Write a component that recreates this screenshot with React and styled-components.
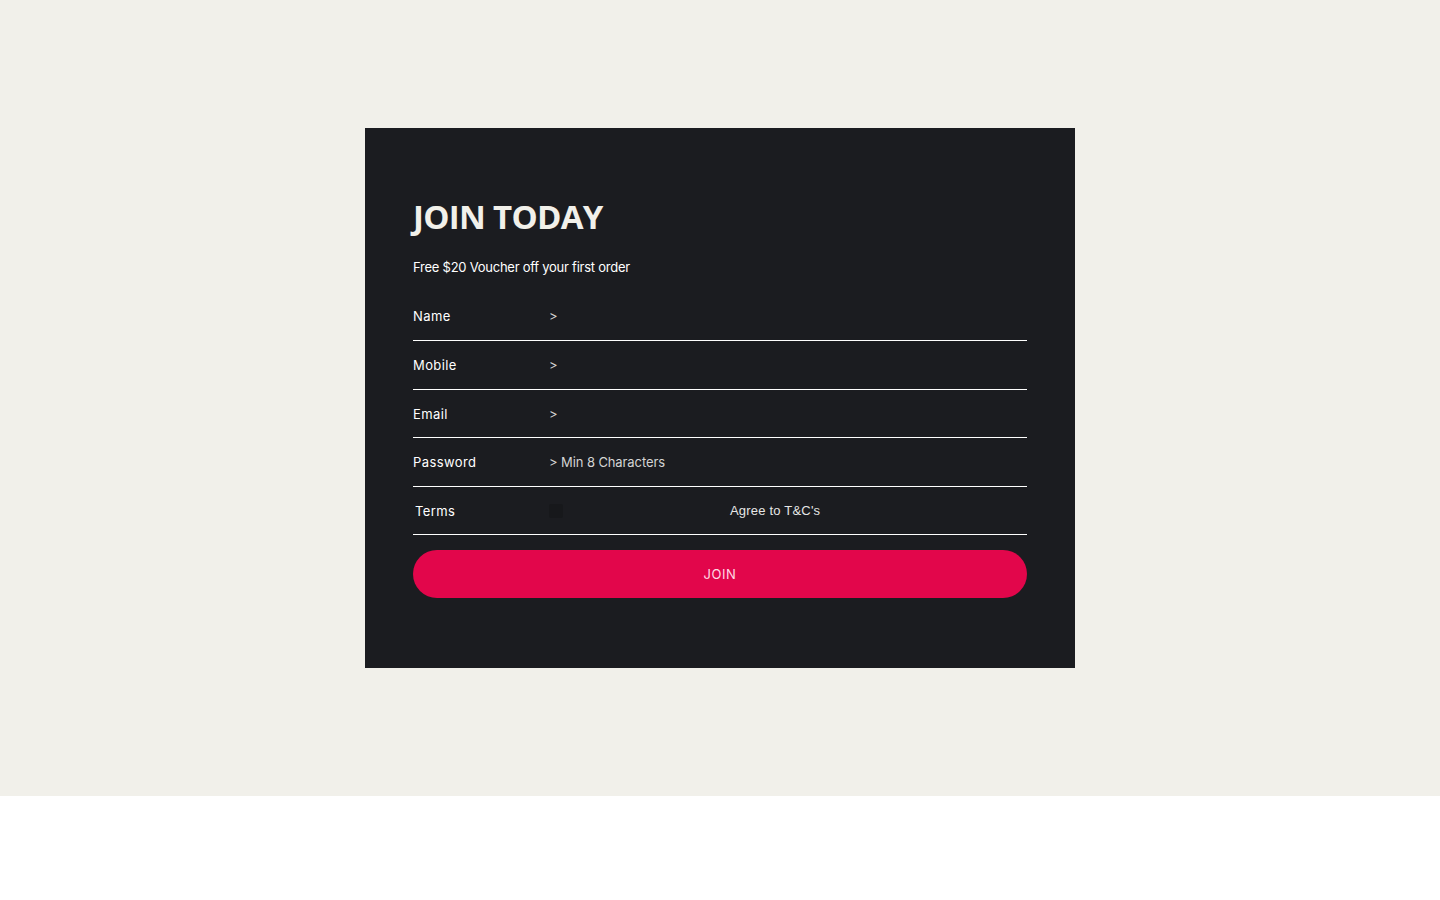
import React from "react";
import styled, { createGlobalStyle } from "styled-components";

const Global = createGlobalStyle`
  html, body { margin: 0; padding: 0; background: #ffffff; }
  body { font-family: Inter, "Liberation Sans", sans-serif; }
  * { box-sizing: border-box; }
`;

const Section = styled.section`
  background: #f1f0ea;
  padding: 128px 0;
  display: flex;
  justify-content: center;
`;

const Card = styled.div`
  width: 710px;
  height: 540px;
  background: #1b1c20;
  padding: 65px 48px 48px;
  display: flex;
  flex-direction: column;
`;

const Title = styled.h1`
  margin: 0;
  font-family: "Open Sans", sans-serif;
  font-weight: 700;
  font-size: 33px;
  line-height: 48px;
  color: #f1f0ea;
  letter-spacing: -0.7px;
`;

const Subtitle = styled.p`
  margin: 17px 0 16px;
  font-family: Inter, sans-serif;
  font-size: 13px;
  line-height: 18px;
  letter-spacing: -0.25px;
  color: #ffffff;
`;

const Row = styled.label`
  display: grid;
  grid-template-columns: 136px 1fr;
  align-items: center;
  height: ${(p) => (p.$tall ? "49px" : "48px")};
  border-bottom: 1px solid #ffffff;
`;

const Label = styled.span`
  font-family: Inter, sans-serif;
  font-size: 13px;
  letter-spacing: 0.4px;
  color: #ffffff;
  padding-left: ${(p) => (p.$indent ? "2px" : "0")};
`;

const Input = styled.input`
  background: transparent;
  border: none;
  outline: none;
  padding: 0;
  font-family: Inter, sans-serif;
  font-size: 13px;
  letter-spacing: -0.1px;
  color: #ffffff;
  &::placeholder { color: #d4d4d4; }
`;

const TermsCell = styled.span`
  display: flex;
  align-items: center;
`;

const Box = styled.span`
  width: 14px;
  height: 14px;
  background: #17181b;
  border-radius: 2px;
  margin-right: 167px;
`;

const Agree = styled.span`
  font-family: "Liberation Sans", Arial, sans-serif;
  font-size: 13px;
  letter-spacing: 0.2px;
  color: #e6e6e6;
`;

const Button = styled.button`
  margin-top: 15px;
  height: 48px;
  border: none;
  border-radius: 24px;
  background: #e2064b;
  color: #ffd9e4;
  font-family: Inter, sans-serif;
  font-size: 13px;
  letter-spacing: 0.6px;
  cursor: pointer;
`;

export default function App() {
  return (
    <>
      <Global />
      <Section>
        <Card>
          <Title>JOIN TODAY</Title>
          <Subtitle>Free $20 Voucher off your first order</Subtitle>
          <Row $tall>
            <Label>Name</Label>
            <Input placeholder=">" />
          </Row>
          <Row $tall>
            <Label>Mobile</Label>
            <Input placeholder=">" />
          </Row>
          <Row>
            <Label>Email</Label>
            <Input placeholder=">" />
          </Row>
          <Row $tall>
            <Label>Password</Label>
            <Input placeholder="> Min 8 Characters" />
          </Row>
          <Row>
            <Label $indent>Terms</Label>
            <TermsCell>
              <Box />
              <Agree>Agree to T&amp;C's</Agree>
            </TermsCell>
          </Row>
          <Button>JOIN</Button>
        </Card>
      </Section>
    </>
  );
}
